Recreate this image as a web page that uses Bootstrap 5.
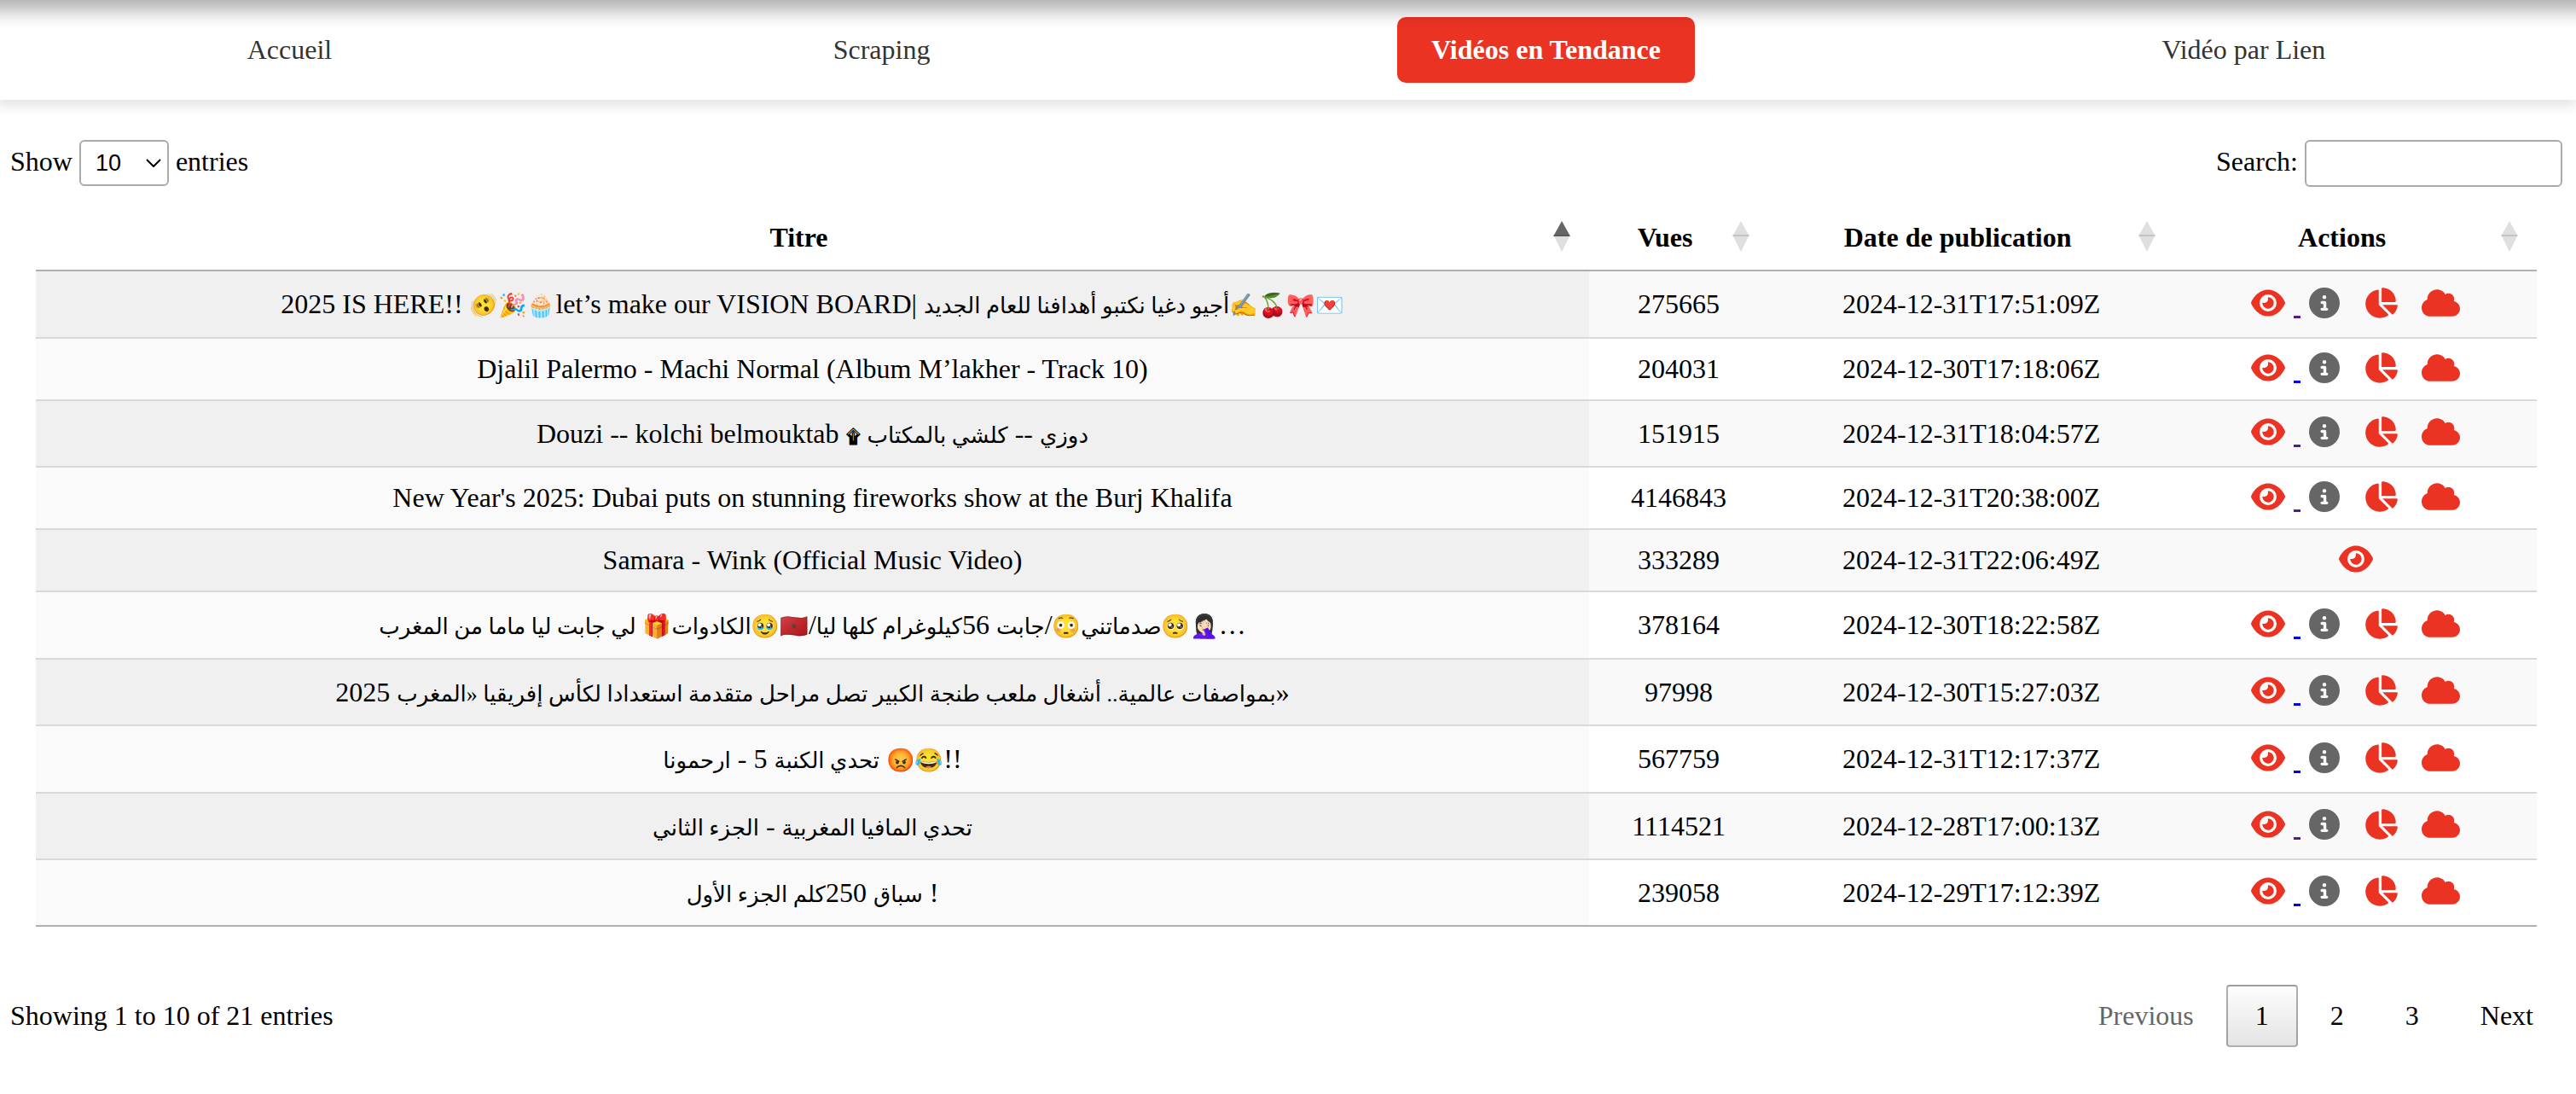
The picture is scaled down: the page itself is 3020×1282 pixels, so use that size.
<!DOCTYPE html>
<html lang="fr">
<head>
<meta charset="utf-8">
<title>Vidéos en Tendance</title>
<meta name="viewport" content="width=device-width, initial-scale=1">
<link href="https://cdn.jsdelivr.net/npm/bootstrap@5.3.0/dist/css/bootstrap.min.css" rel="stylesheet">
<style>
body{font:32px/37px "Liberation Serif","DejaVu Sans",serif;color:#000;background:#fff}
.top-shade{height:34px;pointer-events:none;background:linear-gradient(rgba(0,0,0,.28),rgba(0,0,0,.22) 20%,rgba(0,0,0,.12) 45%,rgba(0,0,0,.04) 70%,transparent);z-index:5}
.site-nav{padding:20px 0;margin-left:-4px;box-shadow:0 8px 12px rgba(0,0,0,.1);background:#fff}
.site-nav a{color:#333;padding:20px 40px;border-radius:10px;text-decoration:none;white-space:nowrap}
.site-nav a.active{background:#eb3323;color:#fff;font-weight:bold}
.dt-wrap{padding:47px 16px 0 12px}
.dt-tools label{gap:8px}
.dt-length{height:54px;width:105px;border:2px solid #aaa;border-radius:6px;font:27px "Liberation Sans",sans-serif;padding:0 0 0 17px;appearance:none;background:#fff url("data:image/svg+xml,%3Csvg xmlns='http://www.w3.org/2000/svg' viewBox='0 0 18 10'%3E%3Cpath d='M1 1l8 8 8-8' fill='none' stroke='%23000' stroke-width='2'/%3E%3C/svg%3E") no-repeat right 7px center/18px 10px}
.dt-search{height:55px;width:302px;border:2px solid #aaa;border-radius:6px;background:transparent;padding:10px;font:27px "Liberation Sans",sans-serif}
.dt-table{width:98%;margin:21px auto 0;border-collapse:separate;border-spacing:0;table-layout:fixed;text-align:center}
.dt-table th{padding:20px 52px 19px 20px;border-bottom:2px solid #b1b1b1;position:relative;white-space:nowrap}
.dt-table th svg{position:absolute;right:22px;top:19px}
.c-views{width:210px}.c-date{width:476px}.c-act{width:425px}
.dt-table td{height:73px;padding:0;border-top:2px solid #d9d9d9;white-space:nowrap;vertical-align:middle}
.dt-table .ar td{height:78px}
.dt-table .emo td{height:79px}
.dt-table tbody tr:first-child td{border-top:0;height:77px}
.dt-table tbody tr:last-child td{border-bottom:2px solid #b1b1b1;height:80px}
.dt-table tbody tr:nth-child(odd) td{background:#f9f9f9}
.dt-table tbody tr:nth-child(odd) td:first-child{background:#f0f0f0}
.dt-table tbody tr:nth-child(even) td:first-child{background:#fafafa}
.arabic{font-size:26px;line-height:1}
.emoji{font:27px/1 "Noto Color Emoji","DejaVu Sans",sans-serif}
.ornament{font-size:22px;line-height:1;font-weight:bold}
.acts{gap:28px;padding-bottom:4px}
.acts a,.acts button{display:flex;border:0;padding:0;background:none;color:#eb3323}
.acts .see{gap:10px;margin-right:-18px;align-items:end}
.acts .see::after{content:"";width:8px;height:3px;background:#00e}
.acts .see.seen::after{background:#551a8b}
.acts .solo{margin:0}.acts .solo::after{display:none}
.acts .inf{color:#666}
.acts svg{height:36px;fill:currentColor}
.dt-foot{margin-top:68px}
.pager{gap:4px}
.pager button{border:2px solid transparent;border-radius:4px;padding:16px 32px;background:none;color:#000;line-height:37px}
.pager button:disabled{color:#666}
.pager .current{border-color:rgba(0,0,0,.3);background:linear-gradient(#fdfdfd,#e4e4e4)}
</style>
<script src="https://cdn.jsdelivr.net/npm/bootstrap@5.3.0/dist/js/bootstrap.bundle.min.js"></script>
</head>
<body>
<svg class="d-none">
<symbol id="eye" viewBox="0 0 576 512"><path d="M288 32c-80.800 0-145.500 36.800-192.600 80.600C48.600 156 17.300 208 2.500 243.700c-3.300 7.900-3.300 16.700 0 24.600C17.300 304 48.600 356 95.400 399.400C142.500 443.200 207.200 480 288 480s145.500-36.800 192.600-80.600c46.800-43.500 78.100-95.400 93-131.100c3.300-7.900 3.300-16.700 0-24.600c-14.900-35.700-46.200-87.700-93-131.100C433.500 68.800 368.800 32 288 32zM144 256a144 144 0 1 1 288 0 144 144 0 1 1-288 0zm144-64c0 35.300-28.700 64-64 64c-7.100 0-13.900-1.200-20.300-3.300c-5.500-1.800-11.900 1.600-11.700 7.400c.3 6.900 1.300 13.800 3.200 20.700c13.700 51.200 66.400 81.600 117.600 67.900s81.600-66.400 67.900-117.600c-11.100-41.500-47.800-69.400-88.600-71.100c-5.800-.2-9.200 6.100-7.400 11.700c2.100 6.400 3.300 13.200 3.300 20.300z"/></symbol>
<symbol id="inf" viewBox="0 0 512 512"><path d="M256 512A256 256 0 1 0 256 0a256 256 0 1 0 0 512zM216 336h24V272H216c-13.300 0-24-10.700-24-24s10.700-24 24-24h48c13.300 0 24 10.700 24 24v88h8c13.300 0 24 10.700 24 24s-10.700 24-24 24H216c-13.300 0-24-10.700-24-24s10.700-24 24-24zm40-208a32 32 0 1 1 0 64 32 32 0 1 1 0-64z"/></symbol>
<symbol id="pie" viewBox="0 0 576 512"><path d="M304 240V16.600c0-9 7-16.600 16-16.600C443.700 0 544 100.300 544 224c0 9-7.600 16-16.600 16H304zM32 272C32 150.700 122.100 50.300 239 34.300c9.200-1.300 17 6.100 17 15.400V288L412.500 444.500c6.700 6.700 6.200 17.700-1.500 23.100C371.800 495.600 323.800 512 272 512C139.500 512 32 404.600 32 272zm526.400 16c9.300 0 16.600 7.800 15.400 17c-7.700 55.900-34.600 105.600-73.900 142.300c-6 5.600-15.400 5.200-21.200-.7L320 288H558.400z"/></symbol>
<symbol id="cloud" viewBox="0 0 640 512"><path d="M0 336c0 79.500 64.500 144 144 144H512c70.700 0 128-57.300 128-128c0-61.900-44-113.600-102.400-125.400c4.100-10.700 6.400-22.400 6.400-34.600c0-53-43-96-96-96c-19.700 0-38.100 6-53.300 16.200C367 64.200 315.300 32 256 32C167.600 32 96 103.600 96 192c0 2.700 .1 5.400 .2 8.100C40.200 219.800 0 273.200 0 336z"/></symbol>
</svg>
<div class="top-shade position-absolute top-0 start-0 end-0"></div>
<nav class="site-nav d-flex justify-content-around">
<a href="#">Accueil</a><a href="#">Scraping</a><a href="#" class="active">Vidéos en Tendance</a><a href="#">Vidéo par Lien</a>
</nav>
<main class="dt-wrap">
<div class="dt-tools d-flex justify-content-between align-items-start">
<label class="d-flex align-items-baseline">Show <select class="dt-length"><option>10</option><option>25</option></select> entries</label>
<label class="d-flex align-items-baseline">Search: <input type="search" class="dt-search"></label>
</div>
<table class="dt-table">
<thead><tr>
<th>Titre<svg width="20" height="36"><path d="M10 0l10 18H0z" opacity=".6"/><path d="M0 16h20L10 36z" opacity=".125"/></svg></th>
<th class="c-views">Vues<svg width="20" height="36"><path d="M10 0l10 18H0z" opacity=".125"/><path d="M0 16h20L10 36z" opacity=".125"/></svg></th>
<th class="c-date">Date de publication<svg width="20" height="36"><path d="M10 0l10 18H0z" opacity=".125"/><path d="M0 16h20L10 36z" opacity=".125"/></svg></th>
<th class="c-act">Actions<svg width="20" height="36"><path d="M10 0l10 18H0z" opacity=".125"/><path d="M0 16h20L10 36z" opacity=".125"/></svg></th>
</tr></thead>
<tbody id="rows"></tbody>
</table>
<div class="dt-foot d-flex justify-content-between align-items-center">
<div>Showing 1 to 10 of 21 entries</div>
<div class="pager d-flex"><button disabled>Previous</button><button class="current">1</button><button>2</button><button>3</button><button>Next</button></div>
</div>
</main>
<script>
const videos=[
["emo","2025 IS HERE!! 🫨🎉🧁let’s make our VISION BOARD| أجيو دغيا نكتبو أهدافنا للعام الجديد✍️🍒🎀💌","275665","2024-12-31T17:51:09Z","seen"],
["","Djalil Palermo - Machi Normal (Album M’lakher - Track 10)","204031","2024-12-30T17:18:06Z",""],
["ar","Douzi -- kolchi belmouktab ۩ دوزي -- كلشي بالمكتاب","151915","2024-12-31T18:04:57Z","seen"],
["","New Year's 2025: Dubai puts on stunning fireworks show at the Burj Khalifa","4146843","2024-12-31T20:38:00Z","seen"],
["","Samara - Wink (Official Music Video)","333289","2024-12-31T22:06:49Z","solo"],
["emo","صدماتني😳/جابت 56كيلوغرام كلها ليا/🇲🇦🥹الكادوات🎁 لي جابت ليا ماما من المغرب🥺🤦🏻‍♀️…","378164","2024-12-30T18:22:58Z",""],
["ar","بمواصفات عالمية.. أشغال ملعب طنجة الكبير تصل مراحل متقدمة استعدادا لكأس إفريقيا «المغرب 2025»","97998","2024-12-30T15:27:03Z",""],
["emo","تحدي الكنبة 5 - ارحمونا 😡😂!!","567759","2024-12-31T12:17:37Z",""],
["ar","تحدي المافيا المغربية - الجزء الثاني","1114521","2024-12-28T17:00:13Z","seen"],
["ar","سباق 250كلم الجزء الأول !","239058","2024-12-29T17:12:39Z",""]];
// Arabic runs and emoji get their own size; each emoji is isolated so that it follows the direction of the text around it
const dress=t=>t
 .replace(/\p{RI}\p{RI}|\p{Extended_Pictographic}(?:\uFE0F|\p{EMod}|\u200D\p{Extended_Pictographic})*/gu,'<bdi class="emoji">$&</bdi>')
 .replace(/[\u0621-\u064A]+(?:[ .«]+[\u0621-\u064A]+)*/g,'<span class="arabic">$&</span>')
 .replace("۩",'<span class="ornament">۩</span>');
const icon=(id,w)=>`<svg width="${w}" height="36"><use href="#${id}"/></svg>`;
document.getElementById("rows").innerHTML=videos.map(([kind,title,views,date,state])=>`<tr class="${kind}"><td>${dress(title)}</td><td>${views}</td><td>${date}</td><td><div class="acts d-flex justify-content-center"><a href="#" class="see ${state}" aria-label="Voir">${icon("eye",40)}</a>${state==="solo"?"":`<button class="inf" aria-label="Infos">${icon("inf",36)}</button><button aria-label="Statistiques">${icon("pie",40)}</button><button aria-label="Nuage de mots">${icon("cloud",45)}</button>`}</div></td></tr>`).join("");
</script>
</body>
</html>
